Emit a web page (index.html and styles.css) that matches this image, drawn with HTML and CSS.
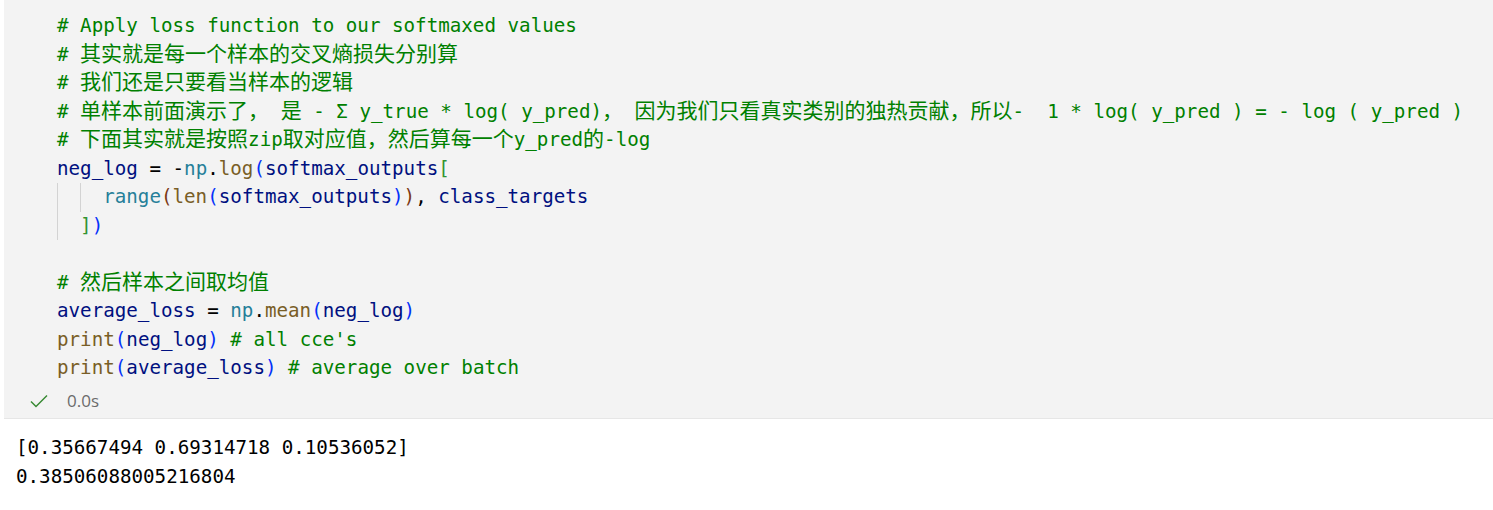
FILE: index.html
```html
<!DOCTYPE html>
<html lang="zh-CN">
<head>
<meta charset="utf-8">
<title>Notebook cell</title>
<link rel="stylesheet" href="styles.css">
</head>
<body>
<div class="cell">
  <div class="editor">
    <div class="ln"><span class="c"># Apply loss function to our softmaxed values</span></div>
    <div class="ln"><span class="c"># <span class="cj">其实就是每一个样本的交叉熵损失分别算</span></span></div>
    <div class="ln"><span class="c"># <span class="cj">我们还是只要看当样本的逻辑</span></span></div>
    <div class="ln"><span class="c"># <span class="cj">单样本前面演示了，</span> <span class="cj">是</span> - Σ y_true * log( y_pred)<span class="cj">，</span> <span class="cj">因为我们只看真实类别的独热贡献，所以</span>-  1 * log( y_pred ) = - log ( y_pred )</span></div>
    <div class="ln"><span class="c"># <span class="cj">下面其实就是按照</span>zip<span class="cj">取对应值，然后算每一个</span>y_pred<span class="cj">的</span>-log</span></div>
    <div class="ln"><span class="v">neg_log</span> = -<span class="t">np</span>.<span class="f">log</span><span class="b1">(</span><span class="v">softmax_outputs</span><span class="b2">[</span></div>
    <div class="ln"><span class="ind"></span><span class="ind"></span><span class="t">range</span><span class="b3">(</span><span class="f">len</span><span class="b1">(</span><span class="v">softmax_outputs</span><span class="b1">)</span><span class="b3">)</span>, <span class="v">class_targets</span></div>
    <div class="ln"><span class="ind"></span><span class="b2">]</span><span class="b1">)</span></div>
    <div class="ln"></div>
    <div class="ln"><span class="c"># <span class="cj">然后样本之间取均值</span></span></div>
    <div class="ln"><span class="v">average_loss</span> = <span class="t">np</span>.<span class="f">mean</span><span class="b1">(</span><span class="v">neg_log</span><span class="b1">)</span></div>
    <div class="ln"><span class="f">print</span><span class="b1">(</span><span class="v">neg_log</span><span class="b1">)</span> <span class="c"># all cce's</span></div>
    <div class="ln"><span class="f">print</span><span class="b1">(</span><span class="v">average_loss</span><span class="b1">)</span> <span class="c"># average over batch</span></div>
  </div>
  <div class="status">
    <svg class="check" width="18" height="14" viewBox="0 0 18 14" aria-hidden="true">
      <path d="M1 7.5 L6 12.5 L17 1.5" fill="none" stroke="#388a34" stroke-width="1.5"/>
    </svg>
    <span class="time">0.0s</span>
  </div>
</div>
<div class="output">
  <div class="oln">[0.35667494 0.69314718 0.10536052]</div>
  <div class="oln">0.38506088005216804</div>
</div>
</body>
</html>
```

FILE: styles.css
```css
html, body {
  margin: 0;
  padding: 0;
  background: #ffffff;
}

.cell {
  margin-left: 4px;
  background: #f3f3f3;
  border-bottom: 1px solid #e6e6e6;
}

.editor {
  padding: 12px 0 0 53px;
  font-family: "DejaVu Sans Mono", "Noto Sans CJK SC", monospace;
  font-size: 19.2px;
  color: #000000;
}

.ln {
  height: 28.5px;
  line-height: 28.5px;
  white-space: pre;
}

.cj {
  font-family: "Noto Sans CJK SC", sans-serif;
  font-size: 21px;
  line-height: 20px;
}

.ind {
  display: inline-block;
  width: 23.1px;
  height: 28.5px;
  vertical-align: top;
  box-shadow: inset 1px 0 0 #d3d3d3;
}

.c { color: #008000; }
.v { color: #001080; }
.f { color: #795e26; }
.t { color: #267f99; }
.b1 { color: #0431fa; }
.b2 { color: #319331; }
.b3 { color: #7b3814; }

.status {
  display: flex;
  align-items: center;
  height: 35px;
  padding-left: 26px;
}

.check {
  display: block;
  margin-top: 2px;
}

.time {
  margin-left: 19px;
  margin-top: 1px;
  font-family: "Open Sans", "Noto Sans", sans-serif;
  font-size: 17px;
  color: #6b6b6b;
}

.output {
  padding: 14px 0 0 16px;
  font-family: "DejaVu Sans Mono", monospace;
  font-size: 19.2px;
  color: #000000;
}

.oln {
  line-height: 29.5px;
  white-space: pre;
}
```
